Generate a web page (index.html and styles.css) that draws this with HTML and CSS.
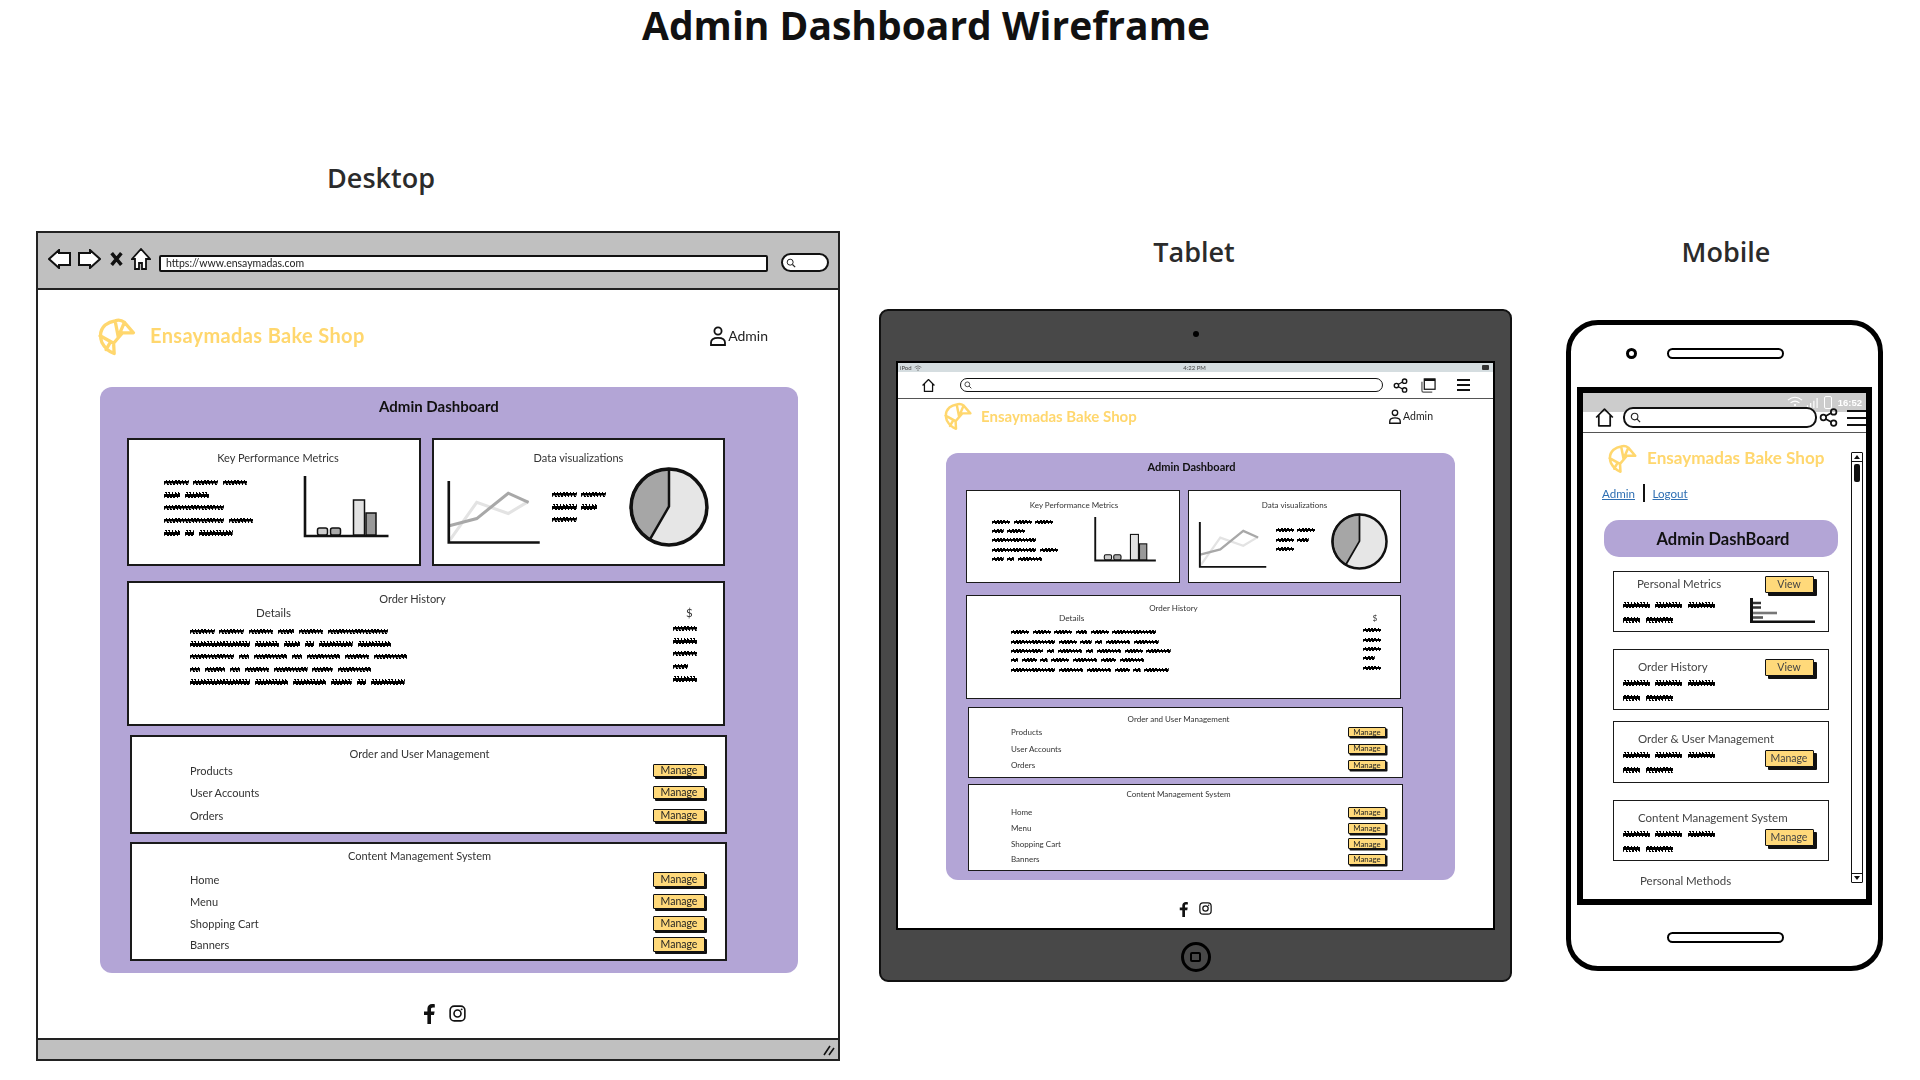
FILE: index.html

```html
<!DOCTYPE html>
<html lang="en">
<head>
  <meta charset="UTF-8">
  <title>Admin Dashboard Wireframe</title>
  <link rel="stylesheet" href="styles.css">
</head>
<body>

  <!-- shared icons -->
  <svg class="sprite" aria-hidden="true">
    <symbol id="logo" viewBox="18 18 130 124">
      <path d="M75 26 Q92 20 106 31 L136 66 L100 66 L70 101 L72 135 Q45 125 31 98 Q18 62 42 40 Q56 29 75 26 Z M75 26 L86 82 M106 31 L91 66 M25 76 L70 101 M45 122 L60 96" fill="none" stroke="#ffd76e" stroke-width="11" stroke-linejoin="round" stroke-linecap="round"/>
    </symbol>
    <symbol id="user" viewBox="0 0 18 20">
      <circle cx="9" cy="5" r="3.6" fill="none" stroke="#111" stroke-width="1.8"/>
      <path d="M2 19 V16.5 Q2 11.8 9 11.8 Q16 11.8 16 16.5 V19 Z" fill="none" stroke="#111" stroke-width="1.8"/>
    </symbol>
    <symbol id="bars" viewBox="0 0 85 62">
      <path d="M1.5 0 V60 H85" fill="none" stroke="#111" stroke-width="2.6"/>
      <rect x="14" y="52" width="10" height="7" rx="2" fill="#ccc" stroke="#111" stroke-width="1.5"/>
      <rect x="27" y="52" width="10" height="7" rx="2" fill="#aaa" stroke="#111" stroke-width="1.5"/>
      <rect x="50" y="24" width="11" height="35" fill="#e2e2e2" stroke="#111" stroke-width="1.5"/>
      <rect x="62.5" y="37" width="10" height="22" fill="#999" stroke="#111" stroke-width="1.5"/>
    </symbol>
    <symbol id="trend" viewBox="0 0 91 62">
      <polyline points="2,59 29,21 60,32 80,20" fill="none" stroke="#e3e3e3" stroke-width="3"/>
      <polyline points="2,44 29,37 60,12 80,21" fill="none" stroke="#a8a8a8" stroke-width="3"/>
      <path d="M1.5 0 V60.5 H91" fill="none" stroke="#111" stroke-width="2.6"/>
    </symbol>
    <symbol id="pie" viewBox="0 0 77 77">
      <circle cx="38.5" cy="38.5" r="36.5" fill="#e6e6e6"/>
      <path d="M38.5 2 V38 L20 70 A36.5 36.5 0 0 1 38.5 2 Z" fill="#a6a6a6" stroke="#111" stroke-width="2.4" stroke-linejoin="round"/>
      <circle cx="38.5" cy="38.5" r="36.5" fill="none" stroke="#111" stroke-width="3.4"/>
    </symbol>
    <symbol id="fb" viewBox="0 0 12 20">
      <path d="M8 20 V11 H11 L11.6 7.4 H8 V5.2 C8 4.1 8.4 3.4 10 3.4 H11.8 V.2 C11.3 .1 10.3 0 9.2 0 C6.5 0 4.4 1.7 4.4 4.8 V7.4 H1 V11 H4.4 V20 Z" fill="#111"/>
    </symbol>
    <symbol id="ig" viewBox="0 0 18 18">
      <rect x="1.2" y="1.2" width="15.6" height="15.6" rx="4.4" fill="none" stroke="#111" stroke-width="1.7"/>
      <circle cx="9" cy="9" r="3.7" fill="none" stroke="#111" stroke-width="1.7"/>
      <circle cx="13.4" cy="4.6" r="1" fill="#111"/>
    </symbol>
    <symbol id="home" viewBox="0 0 24 24">
      <path d="M2.5 12 L12 2.5 L21.5 12 M5.5 9.5 V21.5 H18.5 V9.5" fill="none" stroke="#111" stroke-width="2" stroke-linejoin="round"/>
    </symbol>
    <symbol id="share" viewBox="0 0 24 24">
      <path d="M8 10.5 L16 6 M8 13.5 L16 18" stroke="#111" stroke-width="2"/>
      <circle cx="5.5" cy="12" r="3.5" fill="none" stroke="#111" stroke-width="2.2"/>
      <circle cx="18.5" cy="5" r="3.5" fill="none" stroke="#111" stroke-width="2.2"/>
      <circle cx="18.5" cy="19" r="3.5" fill="none" stroke="#111" stroke-width="2.2"/>
    </symbol>
    <symbol id="lens" viewBox="0 0 12 12">
      <circle cx="5" cy="5" r="3.6" fill="none" stroke="#222" stroke-width="1.2"/>
      <path d="M7.8 7.8 L11 11" stroke="#222" stroke-width="1.4"/>
    </symbol>
  </svg>

  <h1 class="page-title">Admin Dashboard Wireframe</h1>
  <h2 class="device-label label-desktop">Desktop</h2>
  <h2 class="device-label label-tablet">Tablet</h2>
  <h2 class="device-label label-mobile">Mobile</h2>

  <!-- DESKTOP -->
  <div class="browser desktop">
    <div class="browser-bar">
      <svg class="nav-arrow" viewBox="0 0 23 20"><polygon points="1,10 11,1 11,4 22,4 22,16 11,16 11,19" fill="#fff" stroke="#111" stroke-width="2"/></svg>
      <svg class="nav-arrow" viewBox="0 0 23 20"><polygon points="1,4 12,4 12,1 22,10 12,19 12,16 1,16" fill="#fff" stroke="#111" stroke-width="2"/></svg>
      <svg class="nav-x" viewBox="0 0 12 13"><path d="M1.5 1 L10.5 12 M10.5 1 L1.5 12" stroke="#111" stroke-width="3.2"/></svg>
      <svg class="nav-home" viewBox="0 0 20 22"><polygon points="1,11 10,1 19,11 15,11 15,21 11,21 11,15 8,15 8,21 4,21 4,11" fill="#fff" stroke="#111" stroke-width="1.8"/></svg>
      <div class="url-bar">https://www.ensaymadas.com</div>
      <div class="find-box"><svg class="lens"><use href="#lens"/></svg></div>
    </div>

    <div class="site-head">
      <svg class="logo"><use href="#logo"/></svg>
      <span class="brand">Ensaymadas Bake Shop</span>
      <span class="account"><svg class="user"><use href="#user"/></svg>Admin</span>
    </div>

    <section class="panel">
      <h3 class="panel-title">Admin Dashboard</h3>
      <div class="top-cards">
        <div class="card kpi">
          <p class="card-title">Key Performance Metrics</p>
          <div class="kpi-body">
            <div class="lines">
              <div class="ln"><i class="w5"></i><i class="w5"></i><i class="w5"></i></div>
              <div class="ln"><i class="w3"></i><i class="w5"></i></div>
              <div class="ln"><i class="w9"></i></div>
              <div class="ln"><i class="w9"></i><i class="w5"></i></div>
              <div class="ln"><i class="w3"></i><i class="w2"></i><i class="w7"></i></div>
            </div>
            <svg class="bars"><use href="#bars"/></svg>
          </div>
        </div>
        <div class="card data">
          <p class="card-title">Data visualizations</p>
          <div class="data-body">
            <svg class="trend"><use href="#trend"/></svg>
            <div class="lines">
              <div class="ln"><i class="w5"></i><i class="w5"></i></div>
              <div class="ln"><i class="w5"></i><i class="w3"></i></div>
              <div class="ln"><i class="w5"></i></div>
            </div>
            <svg class="pie"><use href="#pie"/></svg>
          </div>
        </div>
      </div>

      <div class="card orders">
        <p class="card-title">Order History</p>
        <div class="orders-body">
          <div class="orders-main">
            <p class="col-head">Details</p>
            <div class="lines">
              <div class="ln"><i class="w5"></i><i class="w5"></i><i class="w5"></i><i class="w3"></i><i class="w5"></i><i class="w9"></i></div>
              <div class="ln"><i class="w9"></i><i class="w5"></i><i class="w3"></i><i class="w2"></i><i class="w7"></i><i class="w7"></i></div>
              <div class="ln"><i class="w8"></i><i class="w2"></i><i class="w7"></i><i class="w2"></i><i class="w7"></i><i class="w5"></i><i class="w7"></i></div>
              <div class="ln"><i class="w2"></i><i class="w4"></i><i class="w2"></i><i class="w5"></i><i class="w7"></i><i class="w4"></i><i class="w7"></i></div>
              <div class="ln"><i class="w9"></i><i class="w7"></i><i class="w7"></i><i class="w4"></i><i class="w2"></i><i class="w7"></i></div>
            </div>
          </div>
          <div class="orders-side">
            <p class="col-head">$</p>
            <div class="lines">
              <div class="ln"><i class="w5"></i></div>
              <div class="ln"><i class="w5"></i></div>
              <div class="ln"><i class="w5"></i></div>
              <div class="ln"><i class="w3"></i></div>
              <div class="ln"><i class="w5"></i></div>
            </div>
          </div>
        </div>
      </div>

      <div class="card mgmt users">
        <p class="card-title">Order and User Management</p>
        <div class="row"><span>Products</span><button class="btn">Manage</button></div>
        <div class="row"><span>User Accounts</span><button class="btn">Manage</button></div>
        <div class="row"><span>Orders</span><button class="btn">Manage</button></div>
      </div>

      <div class="card mgmt cms">
        <p class="card-title">Content Management System</p>
        <div class="row"><span>Home</span><button class="btn">Manage</button></div>
        <div class="row"><span>Menu</span><button class="btn">Manage</button></div>
        <div class="row"><span>Shopping Cart</span><button class="btn">Manage</button></div>
        <div class="row"><span>Banners</span><button class="btn">Manage</button></div>
      </div>
    </section>

    <div class="socials">
      <svg class="fb"><use href="#fb"/></svg>
      <svg class="ig"><use href="#ig"/></svg>
    </div>

    <div class="status-strip">
      <svg class="grip" viewBox="0 0 12 12"><path d="M1 11 L7 2 M6 11 L11 4" stroke="#111" stroke-width="1.6"/></svg>
    </div>
  </div>

  <!-- TABLET -->
  <div class="tablet-shell">
    <span class="camera"></span>
    <div class="browser-screen tablet">
      <div class="ipad-status">
        <span class="ipad-left">iPod
          <svg class="ipad-wifi" viewBox="0 0 12 9"><path d="M1 3.5 Q6 -1 11 3.5 M3 5.5 Q6 3 9 5.5" fill="none" stroke="#555" stroke-width="1"/><circle cx="6" cy="7.6" r="1" fill="#555"/></svg>
        </span>
        <span>4:22 PM</span>
        <span class="ipad-batt"></span>
      </div>
      <div class="tool-row">
        <svg class="tool-home"><use href="#home"/></svg>
        <div class="search-pill"><svg class="lens"><use href="#lens"/></svg></div>
        <svg class="tool-share"><use href="#share"/></svg>
        <svg class="tool-tabs" viewBox="0 0 16 16"><rect x="3.5" y="1" width="11.5" height="11" fill="none" stroke="#111" stroke-width="1.3"/><path d="M3.5 2 H15" stroke="#111" stroke-width="2.4"/><path d="M1 4 V13.5 Q1 15 2.5 15 H12" fill="none" stroke="#555" stroke-width="1.3"/></svg>
        <span class="burger"><i></i><i></i><i></i></span>
      </div>

      <div class="site-head">
        <svg class="logo"><use href="#logo"/></svg>
        <span class="brand">Ensaymadas Bake Shop</span>
        <span class="account"><svg class="user"><use href="#user"/></svg>Admin</span>
      </div>

      <section class="panel">
        <h3 class="panel-title">Admin Dashboard</h3>
        <div class="top-cards">
          <div class="card kpi">
            <p class="card-title">Key Performance Metrics</p>
            <div class="kpi-body">
              <div class="lines">
                <div class="ln"><i class="w5"></i><i class="w5"></i><i class="w5"></i></div>
                <div class="ln"><i class="w3"></i><i class="w5"></i></div>
                <div class="ln"><i class="w9"></i></div>
                <div class="ln"><i class="w9"></i><i class="w5"></i></div>
                <div class="ln"><i class="w3"></i><i class="w2"></i><i class="w7"></i></div>
              </div>
              <svg class="bars"><use href="#bars"/></svg>
            </div>
          </div>
          <div class="card data">
            <p class="card-title">Data visualizations</p>
            <div class="data-body">
              <svg class="trend"><use href="#trend"/></svg>
              <div class="lines">
                <div class="ln"><i class="w5"></i><i class="w5"></i></div>
                <div class="ln"><i class="w5"></i><i class="w3"></i></div>
                <div class="ln"><i class="w5"></i></div>
              </div>
              <svg class="pie"><use href="#pie"/></svg>
            </div>
          </div>
        </div>

        <div class="card orders">
          <p class="card-title">Order History</p>
          <div class="orders-body">
            <div class="orders-main">
              <p class="col-head">Details</p>
              <div class="lines">
                <div class="ln"><i class="w5"></i><i class="w5"></i><i class="w5"></i><i class="w3"></i><i class="w5"></i><i class="w9"></i></div>
                <div class="ln"><i class="w9"></i><i class="w5"></i><i class="w3"></i><i class="w2"></i><i class="w7"></i><i class="w7"></i></div>
                <div class="ln"><i class="w8"></i><i class="w2"></i><i class="w7"></i><i class="w2"></i><i class="w7"></i><i class="w5"></i><i class="w7"></i></div>
                <div class="ln"><i class="w2"></i><i class="w4"></i><i class="w2"></i><i class="w5"></i><i class="w7"></i><i class="w4"></i><i class="w7"></i></div>
                <div class="ln"><i class="w9"></i><i class="w7"></i><i class="w7"></i><i class="w4"></i><i class="w2"></i><i class="w7"></i></div>
              </div>
            </div>
            <div class="orders-side">
              <p class="col-head">$</p>
              <div class="lines">
                <div class="ln"><i class="w5"></i></div>
                <div class="ln"><i class="w5"></i></div>
                <div class="ln"><i class="w5"></i></div>
                <div class="ln"><i class="w3"></i></div>
                <div class="ln"><i class="w5"></i></div>
              </div>
            </div>
          </div>
        </div>

        <div class="card mgmt users">
          <p class="card-title">Order and User Management</p>
          <div class="row"><span>Products</span><button class="btn">Manage</button></div>
          <div class="row"><span>User Accounts</span><button class="btn">Manage</button></div>
          <div class="row"><span>Orders</span><button class="btn">Manage</button></div>
        </div>

        <div class="card mgmt cms">
          <p class="card-title">Content Management System</p>
          <div class="row"><span>Home</span><button class="btn">Manage</button></div>
          <div class="row"><span>Menu</span><button class="btn">Manage</button></div>
          <div class="row"><span>Shopping Cart</span><button class="btn">Manage</button></div>
          <div class="row"><span>Banners</span><button class="btn">Manage</button></div>
        </div>
      </section>

      <div class="socials">
        <svg class="fb"><use href="#fb"/></svg>
        <svg class="ig"><use href="#ig"/></svg>
      </div>
    </div>
    <span class="home-key"><i></i></span>
  </div>

  <!-- MOBILE -->
  <div class="phone-shell">
    <div class="phone-top">
      <span class="phone-cam"></span>
      <span class="speaker"></span>
    </div>
    <div class="phone-screen">
      <div class="phone-status">
        <svg class="p-wifi" viewBox="0 0 18 12"><path d="M1 4.5 Q9 -2 17 4.5 M4 7.5 Q9 3.5 14 7.5" fill="none" stroke="#fff" stroke-width="1.3"/><circle cx="9" cy="10" r="1.3" fill="#fff"/></svg>
        <svg class="p-signal" viewBox="0 0 14 12"><path d="M1.5 12 V9 M5 12 V6.5 M8.5 12 V4 M12 12 V1" stroke="#fff" stroke-width="1.3"/></svg>
        <span class="p-batt"></span>
        <span class="p-time">16:52</span>
      </div>
      <div class="phone-tools">
        <svg class="tool-home"><use href="#home"/></svg>
        <div class="search-pill"><svg class="lens"><use href="#lens"/></svg></div>
        <svg class="tool-share"><use href="#share"/></svg>
        <span class="burger"><i></i><i></i><i></i></span>
      </div>
      <div class="phone-body">
        <div class="phone-main">
          <div class="phone-head">
            <svg class="logo"><use href="#logo"/></svg>
            <span class="brand">Ensaymadas Bake Shop</span>
          </div>
          <div class="phone-links">
            <a href="#">Admin</a>
            <span class="link-sep"></span>
            <a href="#">Logout</a>
          </div>
          <h3 class="pill-title">Admin DashBoard</h3>

          <div class="m-card first">
            <div class="m-left">
              <p class="m-title">Personal Metrics</p>
              <div class="lines">
                <div class="ln"><i class="w5"></i><i class="w5"></i><i class="w5"></i></div>
                <div class="ln"><i class="w3"></i><i class="w5"></i></div>
              </div>
            </div>
            <div class="m-right">
              <button class="btn">View</button>
              <svg class="m-chart" viewBox="0 0 65 25">
                <path d="M3 5 H11 M3 9.5 H11" stroke="#333" stroke-width="2.6"/>
                <path d="M3 15 H27" stroke="#777" stroke-width="2.6"/>
                <path d="M3 19.5 H13" stroke="#555" stroke-width="2.6"/>
                <path d="M1.5 0 V24 H65" fill="none" stroke="#111" stroke-width="3"/>
              </svg>
            </div>
          </div>

          <div class="m-card">
            <div class="m-left">
              <p class="m-title">Order History</p>
              <div class="lines">
                <div class="ln"><i class="w5"></i><i class="w5"></i><i class="w5"></i></div>
                <div class="ln"><i class="w3"></i><i class="w5"></i></div>
              </div>
            </div>
            <div class="m-right"><button class="btn btn-mid">View</button></div>
          </div>

          <div class="m-card tight">
            <div class="m-left">
              <p class="m-title">Order &amp; User Management</p>
              <div class="lines">
                <div class="ln"><i class="w5"></i><i class="w5"></i><i class="w5"></i></div>
                <div class="ln"><i class="w3"></i><i class="w5"></i></div>
              </div>
            </div>
            <div class="m-right"><button class="btn btn-low">Manage</button></div>
          </div>

          <div class="m-card">
            <div class="m-left">
              <p class="m-title">Content Management System</p>
              <div class="lines">
                <div class="ln"><i class="w5"></i><i class="w5"></i><i class="w5"></i></div>
                <div class="ln"><i class="w3"></i><i class="w5"></i></div>
              </div>
            </div>
            <div class="m-right"><button class="btn btn-low">Manage</button></div>
          </div>

          <p class="m-foot">Personal Methods</p>
        </div>
        <div class="scrollbar">
          <span class="sb-up"></span>
          <span class="sb-thumb"></span>
          <span class="sb-down"></span>
        </div>
      </div>
    </div>
    <span class="speaker bottom"></span>
  </div>

</body>
</html>
```

FILE: styles.css

```css
* { box-sizing: border-box; }
html, body { margin: 0; height: 100%; }
body { position: relative; width: 1920px; height: 1080px; overflow: hidden; background: #fff; font-family: Lato, "Liberation Sans", sans-serif; color: #333; }
p, h2, h3 { margin: 0; font-weight: normal; }
svg { display: block; flex: none; }
.sprite { position: absolute; width: 0; height: 0; }

.page-title { margin: 0; padding-right: 68px; text-align: center; font: 700 39px/50px "Open Sans", sans-serif; color: #111; }
.device-label { position: absolute; font: 600 27px/34px "Open Sans", sans-serif; color: #2b2b2b; transform: translateX(-50%); }
.label-desktop { left: 381px; top: 161px; }
.label-tablet { left: 1194px; top: 235px; }
.label-mobile { left: 1726px; top: 235px; }

/* shared pieces */
.panel { background: #b3a5d6; border-radius: 12px; }
.panel-title { text-align: center; font-weight: 700; color: #111; }
.top-cards { display: grid; }
.card { background: #fff; border: 2px solid #1a1a1a; }
.card-title { text-align: center; color: #333; }
.kpi-body, .data-body, .orders-body { display: flex; align-items: flex-start; }
.bars { margin-left: auto; }
.orders-body { justify-content: space-between; }
.row { display: flex; justify-content: space-between; align-items: center; }
.btn { padding: 0; background: #ffd97a; border: 1.5px solid #111; box-shadow: 2px 2px 0 #111; border-radius: 1px; font-family: Lato, sans-serif; color: #222; }
.lines { display: flex; flex-direction: column; }
.ln { display: flex; align-items: center; gap: .5em; }
/* the squiggle words */
.ln i { display: block; height: .55em; background: linear-gradient(#000, #000) center / 100% 50% no-repeat, repeating-linear-gradient(70deg, #000 0 1.4px, transparent 1.4px 3px); border-radius: 1px; }
.w2 { width: 1em; }
.w3 { width: 1.6em; }
.w4 { width: 2.1em; }
.w5 { width: 2.5em; }
.w7 { width: 3.4em; }
.w8 { width: 4.5em; }
.w9 { width: 6.1em; }
.site-head { display: flex; align-items: center; }
.brand { font-weight: 700; color: #ffd76e; }
.account { display: flex; align-items: center; margin-left: auto; color: #222; }
.socials { display: flex; justify-content: center; }
.lens { width: 8px; height: 8px; }

/* desktop browser */
.browser { position: absolute; left: 36px; top: 231px; width: 804px; height: 830px; display: flex; flex-direction: column; background: #fff; border: 2px solid #222; filter: blur(.35px); }
.browser-bar { flex: none; height: 57px; display: flex; align-items: center; padding: 0 0 4px 10px; background: #c0c0c0; border-bottom: 2.5px solid #222; }
.nav-arrow { width: 23px; height: 20px; margin-right: 7px; }
.nav-x { width: 13px; height: 14px; margin: 0 8px 0 2px; }
.nav-home { width: 20px; height: 22px; }
.url-bar { width: 609px; height: 17px; margin: 10px 0 0 8px; padding-left: 5px; background: #fff; border: 2px solid #111; border-radius: 2px; font-size: 10.5px; line-height: 13px; color: #222; }
.find-box { width: 48px; height: 19px; margin: 8px 0 0 13px; display: flex; align-items: center; padding-left: 3px; background: #fff; border: 2.5px solid #111; border-radius: 10px; }
.find-box .lens { width: 10px; height: 10px; }

.desktop .site-head { padding: 27px 70px 0 60px; height: 97px; align-items: flex-start; }
.desktop .logo { width: 39px; height: 40px; }
.desktop .brand { margin: 6px 0 0 13px; font-size: 20px; letter-spacing: .35px; line-height: 24px; }
.desktop .account { margin-top: 9px; font-size: 14px; line-height: 20px; }
.desktop .user { width: 18px; height: 20px; margin-right: 1px; }

.desktop .panel { width: 698px; height: 586px; margin-left: 62px; padding-left: 27px; }
.desktop .panel-title { height: 51px; padding: 10px 47px 0 0; font-size: 15px; line-height: 18px; }
.desktop .top-cards { grid-template-columns: 294px 293px; gap: 11px; height: 128px; }
.desktop .card-title { font-size: 11px; line-height: 14px; }
.desktop .lines { font-size: 9.8px; }
.desktop .ln { height: 12.7px; }
.desktop .kpi { padding-top: 11px; }
.desktop .kpi .card-title { padding-left: 8px; }
.desktop .kpi-body { margin-top: 11px; padding: 0 30px 0 35px; }
.desktop .bars { width: 86px; height: 62px; }
.desktop .data { padding-top: 11px; }
.desktop .data-body { margin-top: 2px; padding-left: 13px; }
.desktop .trend { width: 93px; height: 63px; margin-top: 14px; }
.desktop .data .lines { margin: 21px 0 0 12px; width: 77px; }
.desktop .pie { width: 80px; height: 80px; }
.desktop .orders { width: 598px; height: 145px; margin-top: 15px; padding-top: 9px; }
.desktop .orders .card-title { padding-right: 27px; }
.desktop .orders-body { padding: 0 26px 0 61px; }
.desktop .col-head { font-size: 11.5px; line-height: 14px; text-align: center; }
.desktop .orders-main .col-head { text-align: left; padding-left: 66px; }
.desktop .orders-main .lines { margin-top: 5px; }
.desktop .orders-side .lines { margin-top: 2px; }
.desktop .orders-side .col-head { padding-left: 9px; }
.desktop .mgmt { margin-left: 3px; width: 597px; }
.desktop .users { height: 99px; margin-top: 9px; padding: 10px 18px 0 58px; }
.desktop .cms { height: 119px; margin-top: 8px; padding: 5px 18px 0 58px; }
.desktop .mgmt .card-title { padding-right: 58px; }
.desktop .row { font-size: 11px; height: 22.5px; }
.desktop .users .row:first-of-type { margin-top: -2px; }
.desktop .cms .row { height: 21.7px; }
.desktop .cms .row:first-of-type { margin-top: 6px; }
.desktop .btn { width: 52px; height: 13px; font-size: 10.5px; line-height: 9px; margin-right: 2px; }
.desktop .cms .btn { height: 15px; line-height: 11px; }
.desktop .socials { gap: 14px; margin-top: 31px; padding-left: 12px; }
.desktop .fb { width: 12px; height: 20px; }
.desktop .ig { width: 17px; height: 17px; margin-top: 1px; }
.status-strip { margin-top: auto; height: 21px; display: flex; justify-content: flex-end; align-items: center; padding-right: 3px; background: #c0c0c0; border-top: 2.5px solid #222; }
.grip { width: 12px; height: 12px; }

/* tablet */
.tablet-shell { position: absolute; left: 879px; top: 309px; width: 633px; height: 673px; display: flex; flex-direction: column; align-items: center; background: #484848; border: 2px solid #111; border-radius: 9px; filter: blur(.35px); }
.camera { width: 6px; height: 6px; margin-top: 20px; border-radius: 50%; background: #000; }
.browser-screen { width: 599px; height: 569px; margin-top: 24px; background: #fff; border: 2px solid #000; }
.ipad-status { height: 9px; display: grid; grid-template-columns: 1fr auto 1fr; align-items: center; padding: 0 4px 0 2px; background: #d5dde0; font-size: 6px; line-height: 9px; color: #444; }
.ipad-left { display: flex; align-items: center; gap: 2px; }
.ipad-wifi { width: 8px; height: 6px; }
.ipad-batt { justify-self: end; width: 7px; height: 5px; background: #333; border-radius: 1px; }
.tool-row { display: flex; align-items: center; height: 27px; padding-left: 23px; border-bottom: 1.2px solid #555; }
.tool-row .tool-home { width: 15px; height: 15px; }
.tool-row .search-pill { width: 423px; height: 14px; margin-left: 24px; }
.search-pill { display: flex; align-items: center; padding-left: 3px; background: #fff; border: 1.5px solid #111; border-radius: 10px; }
.tool-row .tool-share { width: 15px; height: 15px; margin-left: 10px; }
.tool-tabs { width: 15px; height: 15px; margin-left: 13px; }
.burger { display: flex; flex-direction: column; }
.burger i { display: block; background: #111; }
.tool-row .burger { width: 13px; gap: 3.5px; margin-left: 21px; }
.tool-row .burger i { height: 1.6px; }

.tablet .site-head { height: 54px; padding: 3px 60px 0 46px; align-items: flex-start; }
.tablet .logo { width: 29px; height: 29px; }
.tablet .brand { margin: 5px 0 0 8px; font-size: 15px; line-height: 18px; }
.tablet .account { margin-top: 6.5px; font-size: 10.5px; line-height: 15px; }
.tablet .user { width: 14px; height: 15px; margin-right: 1px; }

.tablet .panel { width: 509px; height: 427px; margin-left: 48px; padding-left: 20px; }
.tablet .panel-title { height: 37px; padding: 7px 38px 0 0; font-size: 11px; line-height: 14px; }
.tablet .card { border-width: 1.5px; }
.tablet .top-cards { grid-template-columns: 214px 213px; gap: 8px; height: 93px; }
.tablet .card-title { font-size: 8px; line-height: 10px; }
.tablet .lines { font-size: 7.2px; }
.tablet .ln { height: 9.4px; }
.tablet .ln i { height: 4px; }
.tablet .kpi, .tablet .data { padding-top: 8.5px; }
.tablet .kpi .card-title { padding-left: 2px; }
.tablet .kpi-body { margin-top: 7.5px; padding: 0 22px 0 25px; }
.tablet .bars { width: 64px; height: 45px; }
.tablet .data-body { margin-top: 3px; padding-left: 9px; }
.tablet .trend { width: 69px; height: 46px; margin-top: 9px; }
.tablet .data .lines { margin: 13px 0 0 8.5px; width: 55px; }
.tablet .pie { width: 57px; height: 57px; }
.tablet .orders { width: 435px; height: 104px; margin-top: 12px; padding-top: 6.5px; }
.tablet .orders .card-title { padding-right: 20px; }
.tablet .orders-body { padding: 0 19px 0 44px; }
.tablet .col-head { font-size: 8.3px; line-height: 10px; text-align: center; }
.tablet .orders-main .col-head { text-align: left; padding-left: 48px; }
.tablet .orders-main .lines { margin-top: 5px; }
.tablet .orders-side .lines { margin-top: 3px; }
.tablet .orders-side .col-head { padding-left: 6px; }
.tablet .mgmt { margin-left: 2px; width: 435px; }
.tablet .users { height: 71px; margin-top: 8px; padding: 6px 14px 0 42px; }
.tablet .cms { height: 87px; margin-top: 6px; padding: 4px 14px 0 42px; }
.tablet .mgmt .card-title { padding-right: 42px; }
.tablet .row { font-size: 8px; height: 16.5px; }
.tablet .cms .row { height: 15.7px; }
.tablet .cms .row:first-of-type { margin-top: 5.5px; }
.tablet .btn { width: 38px; height: 10px; font-size: 7.8px; line-height: 7px; margin-right: 2px; border-width: 1.2px; box-shadow: 1.5px 1.5px 0 #111; }
.tablet .cms .btn { height: 11px; line-height: 8px; }
.tablet .socials { gap: 11px; margin-top: 22px; }
.tablet .fb { width: 9px; height: 15px; }
.tablet .ig { width: 13px; height: 13px; }
.home-key { width: 30px; height: 30px; margin-top: 12px; display: flex; align-items: center; justify-content: center; border: 3px solid #000; border-radius: 50%; }
.home-key i { display: block; width: 11px; height: 10px; border: 2.5px solid #000; border-radius: 2px; }

/* phone */
.phone-shell { position: absolute; left: 1566px; top: 320px; width: 317px; height: 651px; background: #fff; border: 5px solid #000; border-radius: 32px; filter: blur(.35px); }
.phone-top { display: flex; align-items: center; gap: 30px; margin-top: 23px; padding-left: 55px; }
.phone-cam { width: 11px; height: 11px; border: 3px solid #000; border-radius: 50%; }
.speaker { display: block; width: 117px; height: 11px; border: 2.5px solid #000; border-radius: 6px; }
.speaker.bottom { margin: 27px 0 0 96px; }
.phone-screen { width: 295px; height: 518px; margin: 28px 0 0 6px; background: #fff; border: 6px solid #000; overflow: hidden; }
.phone-status { height: 19px; display: flex; justify-content: flex-end; align-items: center; gap: 3px; padding-right: 4px; background: #ccc; }
.p-wifi { width: 16px; height: 11px; margin-bottom: 2px; }
.p-signal { width: 13px; height: 11px; }
.p-batt { width: 8px; height: 13px; margin-left: 2px; border: 1.3px solid #fff; border-radius: 2px; }
.p-time { margin-left: 3px; font: 700 9.5px/12px "Liberation Sans", sans-serif; color: #fff; }
.phone-tools { position: relative; display: flex; align-items: center; height: 25px; margin-top: -4px; padding: 0 0 5px 11px; border-bottom: 1.5px solid #555; }
.phone-tools .tool-home { width: 21px; height: 21px; }
.phone-tools .search-pill { width: 195px; height: 21px; margin-left: 8px; padding-left: 5px; border-width: 2px; }
.phone-tools .lens { width: 11px; height: 11px; }
.phone-tools .tool-share { width: 19px; height: 19px; margin-left: 2px; }
.phone-tools .burger { width: 19px; gap: 5px; margin-left: 9px; }
.phone-tools .burger i { height: 2px; }
.phone-body { display: flex; }
.phone-main { width: 268px; }
.phone-head { display: flex; align-items: center; padding: 11px 0 0 25px; }
.phone-head .logo { width: 30px; height: 30px; }
.phone-head .brand { margin: -3px 0 0 9px; font-size: 17.1px; line-height: 20px; }
.phone-links { display: flex; align-items: center; height: 18px; margin-top: 10px; padding-left: 19px; font-size: 11.6px; }
.phone-links a { color: #2f6fb3; text-decoration: underline; }
.link-sep { width: 1.5px; height: 18px; margin: 0 8px; background: #111; }
.pill-title { width: 234px; height: 37px; margin: 18px 0 14px 21px; padding-left: 4px; background: #b3a5d6; border-radius: 15px; text-align: center; font-size: 16.5px; font-weight: 700; line-height: 38px; color: #111; }
.m-card { width: 216px; height: 61px; margin: 0 0 11px 30px; display: flex; background: #fff; border: 1.5px solid #1a1a1a; }
.m-card.first { margin-bottom: 17px; }
.m-card.tight { margin-bottom: 17px; height: 62px; }
.m-left { flex: 1; min-width: 0; padding: 10px 0 0 9px; }
.m-title { padding-left: 15px; font-size: 11.5px; line-height: 14px; color: #444; white-space: nowrap; }
.first .m-title { margin-top: -7px; padding-left: 14px; padding-top: 2px; }
.m-left .lines { margin-top: 2px; font-size: 10.8px; }
.first .lines { margin-top: 7px; }
.m-left .ln { height: 14.5px; }
.m-left .ln i { height: 6px; }
.m-right { flex: none; display: flex; flex-direction: column; align-items: flex-end; padding-right: 13px; }
.m-right .btn { width: 49px; height: 17px; margin-top: 4px; font-size: 10.5px; line-height: 13px; color: #444; box-shadow: 3px 3px 0 #111; margin-right: 1.5px; }
.m-right .btn-mid { margin-top: 9px; }
.m-right .btn-low { margin-top: 28px; }
.m-chart { width: 65px; height: 25px; margin: 5px 0 0 0; }
.m-foot { margin: 13px 0 0 57px; font-size: 11.5px; line-height: 14px; color: #444; }
.scrollbar { width: 12px; height: 431px; margin: 19px 0 0 0; display: flex; flex-direction: column; align-items: center; border: 1.5px solid #111; border-radius: 1px; position: relative; }
.sb-up, .sb-down { width: 100%; height: 9px; position: relative; }
.sb-up { border-bottom: 1.5px solid #111; }
.sb-down { margin-top: auto; border-top: 1.5px solid #111; }
.sb-up::after, .sb-down::after { content: ""; position: absolute; left: 2px; top: 1.5px; border: 3px solid transparent; }
.sb-up::after { border-top-width: 0; border-bottom: 4px solid #111; }
.sb-down::after { border-bottom-width: 0; border-top: 4px solid #111; }
.sb-thumb { width: 6px; height: 18px; margin-top: 2px; background: #111; border-radius: 2px; }
```
